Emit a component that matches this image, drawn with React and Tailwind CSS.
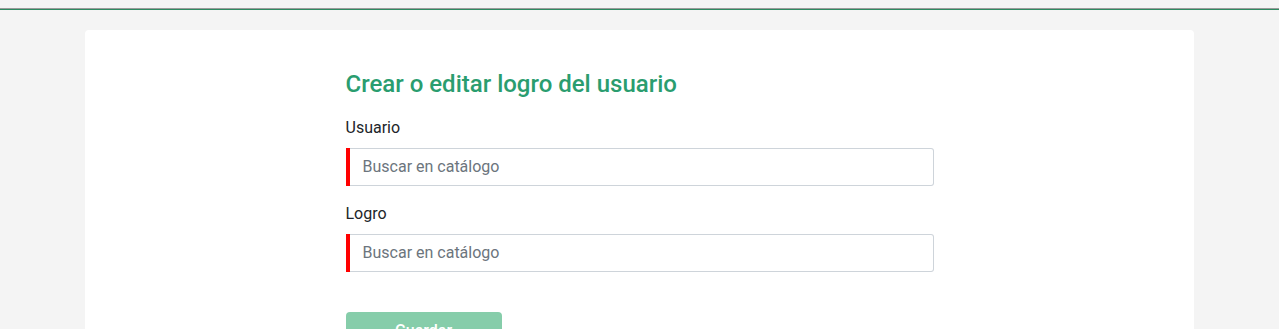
import React from 'react';

const Field = ({ label }) => (
  <div className="mb-[16px]">
    <label className="block text-[16px] leading-[24px] text-[#212529] mb-[8px]">{label}</label>
    <div className="flex h-[38px]">
      <div className="w-[4px] bg-[#ff0000]" />
      <input
        className="flex-1 border border-l-0 border-[#ced4da] rounded-r-[3px] px-[13px] text-[16px] text-[#495057] placeholder:text-[#6c757d] outline-none"
        placeholder="Buscar en catálogo"
      />
    </div>
  </div>
);

export default function App() {
  return (
    <div className="min-h-screen bg-[#f4f4f4] font-['Roboto',sans-serif]">
      <div className="h-[8px]" />
      <div className="h-[1px] bg-[#9a9a9a]" />
      <div className="h-[1px] bg-[#2e8b61]" />
      <div className="pt-[20px] px-[85px]">
        <div className="bg-white rounded-[4px] pt-[38px] pb-[40px]">
          <div className="w-[588px] mx-auto">
            <h2 className="text-[24px] leading-[32px] font-medium text-[#2a9d6f] mb-[16px]">
              Crear o editar logro del usuario
            </h2>
            <Field label="Usuario" />
            <Field label="Logro" />
            <div className="pt-[24px]">
              <button className="w-[156px] h-[38px] rounded-[4px] bg-[#86cdaa] text-white text-[16px] font-medium">
                Guardar
              </button>
            </div>
          </div>
        </div>
      </div>
    </div>
  );
}
